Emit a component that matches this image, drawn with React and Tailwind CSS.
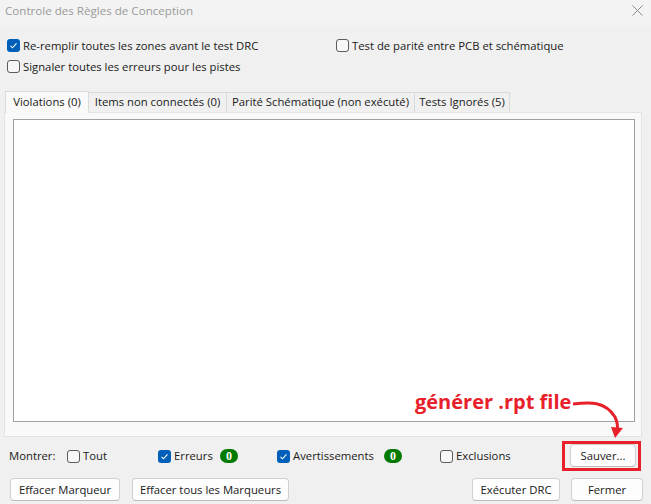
import React from "react";

const font = { fontFamily: '"Segoe UI", "Open Sans", "Liberation Sans", sans-serif' };

const Check = ({ checked, label }) => (
  <label className="flex items-center gap-[3px] text-[11.3px] text-[#1a1a1a] leading-none">
    {checked ? (
      <span className="flex shrink-0 items-center justify-center w-[13px] h-[13px] rounded-[3px] bg-[#005fb8]">
        <svg width="9" height="9" viewBox="0 0 9 9">
          <path d="M1.5 4.8 L3.5 6.8 L7.5 2.3" stroke="#fff" strokeWidth="1.1" fill="none" />
        </svg>
      </span>
    ) : (
      <span className="shrink-0 w-[13px] h-[13px] rounded-[3px] border border-[#5c5c5c] bg-[#f7f7f7]" />
    )}
    <span>{label}</span>
  </label>
);

const Badge = () => (
  <span
    className="flex items-center justify-center w-[18px] h-[14px] rounded-full bg-[#007a00] text-white text-[12px] font-bold leading-none"
    style={{ fontFamily: '"Liberation Serif", serif' }}
  >
    0
  </span>
);

const Btn = ({ children, className = "" }) => (
  <button
    className={
      "h-[23px] rounded-[4px] border border-[#d0d0d0] border-b-[#bcbcbc] bg-[#fdfdfd] text-[11.3px] text-[#1a1a1a] leading-none " +
      className
    }
  >
    {children}
  </button>
);

const tabs = [
  ["Violations (0)", "w-[84px]"],
  ["Items non connectés (0)", "w-[138px]"],
  ["Parité Schématique (non exécuté)", "w-[188px]"],
  ["Tests Ignorés (5)", "w-[95px]"],
];

export default function App() {
  return (
    <div className="relative w-[651px] h-[504px] bg-[#f0f0f0] overflow-hidden flex flex-col" style={font}>
      {/* title bar */}
      <div className="h-[25px] bg-[#f3f3f3] flex items-start justify-between pl-[5px] pr-[8px] pt-[2px]">
        <span className="text-[11.6px] text-[#9a9a9a]">Controle des Règles de Conception</span>
        <svg className="mt-[3px]" width="11" height="11" viewBox="0 0 11 11">
          <path d="M0.5 0.5 L10.5 10.5 M10.5 0.5 L0.5 10.5" stroke="#8a8a8a" strokeWidth="1" />
        </svg>
      </div>

      {/* options */}
      <div className="grid grid-cols-[329px_1fr] pl-[7px] pt-[14px] gap-y-[8px]">
        <Check checked label="Re-remplir toutes les zones avant le test DRC" />
        <Check label="Test de parité entre PCB et schématique" />
        <Check label="Signaler toutes les erreurs pour les pistes" />
      </div>

      {/* tabs */}
      <div className="mt-[18px] pl-[5px] flex items-end h-[21px]">
        {tabs.map(([t, w], i) => (
          <div
            key={t}
            className={
              (i === 0
                ? "h-[22px] bg-[#f9f9f9] border border-b-0 border-[#dadada] relative z-10 mb-[-1px] "
                : "h-[20px] bg-[#f0f0f0] border border-l-0 border-b-0 border-[#dadada] ") +
              w +
              " flex items-center justify-center text-[11.3px] text-[#1a1a1a] whitespace-nowrap"
            }
          >
            {t}
          </div>
        ))}
      </div>

      {/* tab panel */}
      <div className="ml-[4px] w-[638px] h-[325px] bg-[#f9f9f9] border border-[#e3e3e3] pt-[6px] pl-[8px] pr-[6px] pb-[14px] flex">
        <div className="flex-1 bg-white border border-[#a0a0a0]" />
      </div>

      {/* filter row */}
      <div className="mt-[2px] h-[34px] flex items-center text-[11.3px] text-[#1a1a1a]">
        <span className="ml-[9px] w-[58px]">Montrer:</span>
        <div className="w-[91px]">
          <Check label="Tout" />
        </div>
        <div className="w-[119px] flex items-center">
          <div className="w-[62px]">
            <Check checked label="Erreurs" />
          </div>
          <Badge />
        </div>
        <div className="w-[163px] flex items-center">
          <div className="w-[107px]">
            <Check checked label="Avertissements" />
          </div>
          <Badge />
        </div>
        <Check label="Exclusions" />
        <div className="ml-auto mr-[10px] border-[3px] border-[#e8202a] pl-[5px] pr-[2px] pb-[1px]">
          <Btn className="w-[66px] block">Sauver...</Btn>
        </div>
      </div>

      {/* buttons row */}
      <div className="flex items-center mt-[5px]">
        <Btn className="ml-[10px] w-[110px]">Effacer Marqueur</Btn>
        <Btn className="ml-[12px] w-[157px]">Effacer tous les Marqueurs</Btn>
        <Btn className="ml-[183px] w-[88px]">Exécuter DRC</Btn>
        <Btn className="ml-[11px] w-[72px] border-[#005fb8] border-b-[#005fb8]">Fermer</Btn>
      </div>

      {/* annotation */}
      <div
        className="absolute left-[415px] top-[392px] text-[20px] font-bold text-[#e8202a] leading-none"
        style={{ fontFamily: '"Open Sans", "Liberation Sans", sans-serif' }}
      >
        générer .rpt file
      </div>
      <svg className="absolute left-[560px] top-[395px]" width="80" height="50" viewBox="0 0 80 50">
        <path d="M13 9 C 30 7, 45 6, 55 22 C 58 28, 58 32, 57 37" stroke="#e8202a" strokeWidth="3" fill="none" />
        <path d="M51 32 L63 33 L55 43 Z" fill="#e8202a" />
      </svg>
    </div>
  );
}
